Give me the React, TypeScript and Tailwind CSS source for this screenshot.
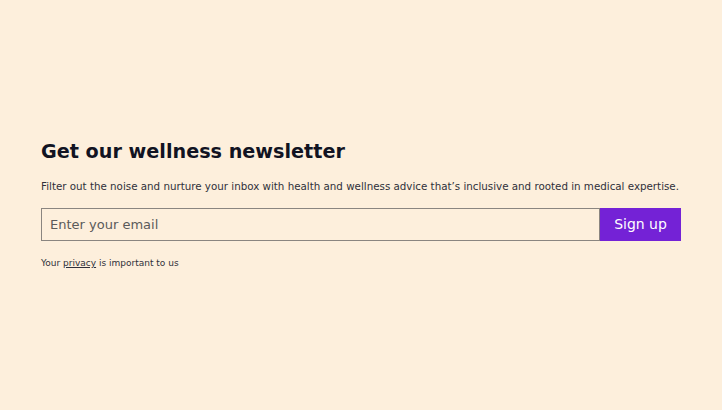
const App = () => {
    return (
        <div className="min-h-screen w-full bg-[#fdefdc] flex items-center justify-center" style={{ fontFamily: '"DejaVu Sans", Verdana, sans-serif' }}>
            <div className="w-[640px]">
                <h2 className="text-[19.2px] font-bold text-[#111322] leading-[26px]">Get our wellness newsletter</h2>
                <p className="mt-[13px] text-[10.3px] text-[#2f2f3a] leading-[16px] whitespace-nowrap">
                    Filter out the noise and nurture your inbox with health and wellness advice that’s inclusive and rooted in medical expertise.
                </p>

                {/* form */}
                <form className="mt-[14px] flex h-[33px]" onSubmit={(e) => e.preventDefault()}>
                    <input
                        type="email"
                        placeholder="Enter your email"
                        className="flex-1 h-full border border-[#8a8580] bg-transparent px-[8px] text-[13px] text-[#333] placeholder:text-[#5a5a5a] outline-none"
                    />
                    <button className="w-[81px] h-full bg-[#7422d6] text-white text-[14px] font-normal">Sign up</button>
                </form>

                <p className="mt-[16px] text-[9px] text-[#2f2f3a]">
                    Your <a href="#" className="underline">privacy</a> is important to us
                </p>
            </div>
        </div>
    );
};

export default App;
